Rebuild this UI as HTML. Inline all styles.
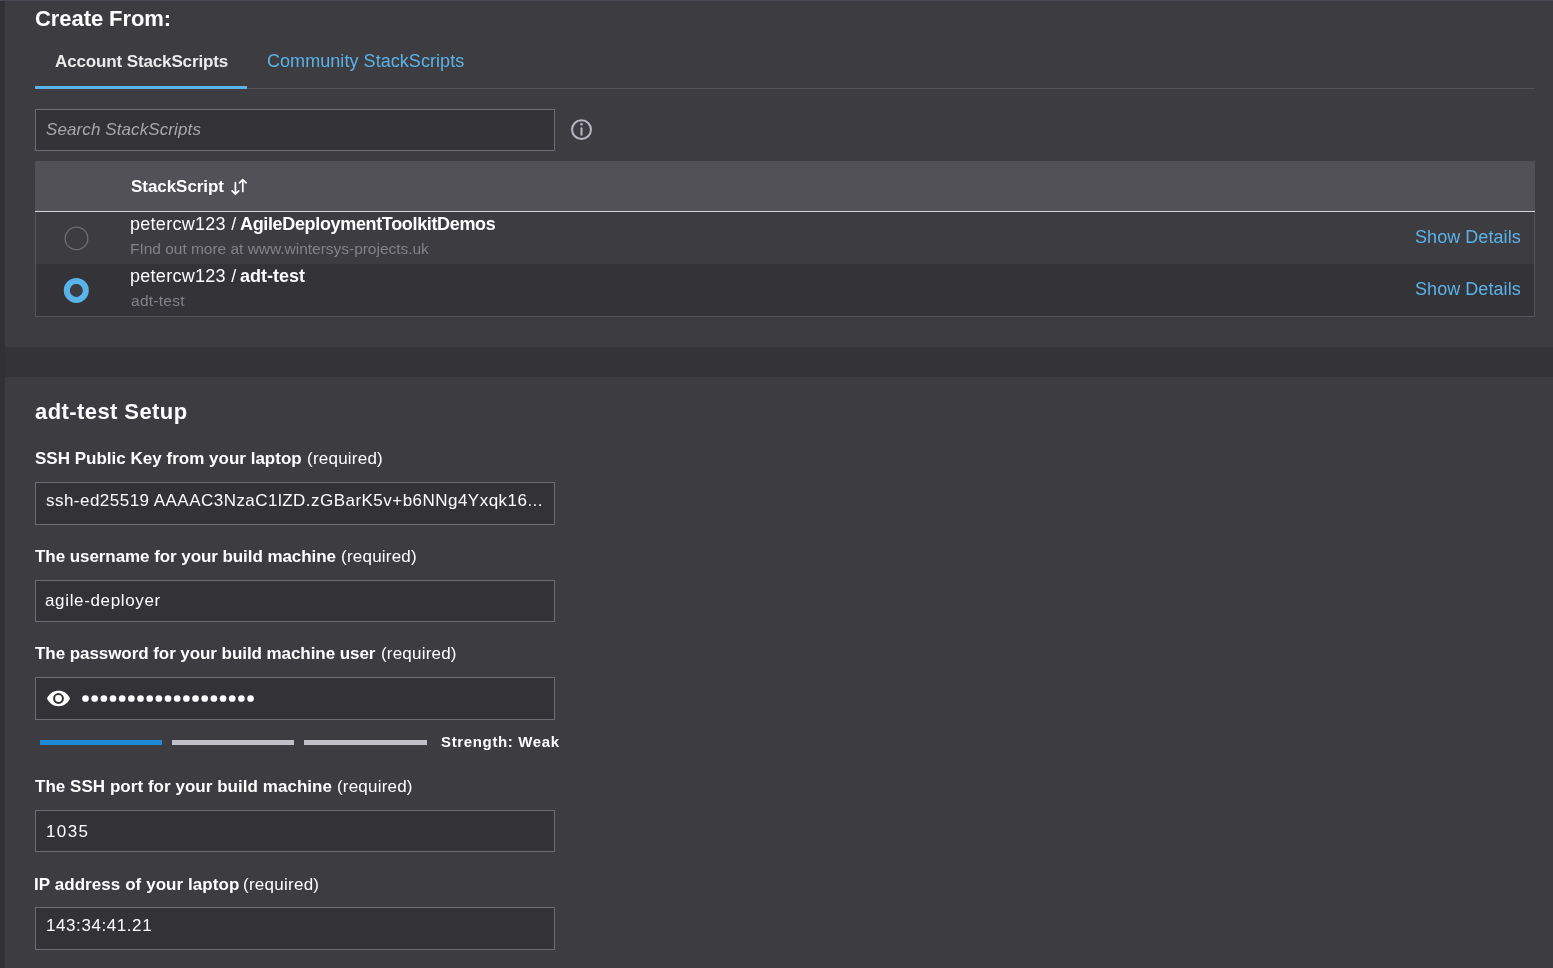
<!DOCTYPE html>
<html><head><meta charset="utf-8"><title>adt-test Setup</title>
<style>
html,body{margin:0;padding:0;width:1553px;height:968px;overflow:hidden;background:#343337;font-family:"Liberation Sans",sans-serif;}
.t{position:absolute;white-space:pre;will-change:transform;}
.r{position:absolute;display:block;}
</style></head><body>
<div class="r" style="left:0px;top:0px;width:5px;height:968px;background:#313034;"></div>
<div class="r" style="left:5px;top:0px;width:1548px;height:347px;background:#3d3c41;"></div>
<div class="r" style="left:0px;top:0px;width:1553px;height:1px;background:#4a4954;"></div>
<div class="r" style="left:5px;top:377px;width:1548px;height:591px;background:#3d3c41;"></div>
<div class="r" style="left:35px;top:88px;width:1500px;height:1px;background:#545358;"></div>
<div class="r" style="left:35px;top:86px;width:212px;height:3px;background:#5ab3e8;"></div>
<div class="r" style="left:35px;top:109px;width:520px;height:42px;background:#333237;box-sizing:border-box;border:1px solid #6e6d73"></div>
<svg class="r" style="left:570px;top:118px" width="23" height="23" viewBox="0 0 23 23"><circle cx="11.5" cy="11.6" r="9.45" fill="none" stroke="#b5b6c0" stroke-width="2.05"/><circle cx="11.5" cy="6.3" r="1.3" fill="#b5b6c0"/><rect x="10.5" y="9.2" width="2.0" height="8.6" rx="1.0" fill="#b5b6c0"/></svg>
<div class="r" style="left:35px;top:161px;width:1500px;height:50px;background:#525157;"></div>
<div class="r" style="left:35px;top:211px;width:1500px;height:1px;background:#d6d6de;"></div>
<div class="r" style="left:35px;top:212px;width:1500px;height:52px;background:#3d3c41;"></div>
<div class="r" style="left:35px;top:264px;width:1500px;height:52px;background:#343338;"></div>
<div class="r" style="left:35px;top:212px;width:1px;height:105px;background:#55545a;"></div>
<div class="r" style="left:1534px;top:212px;width:1px;height:105px;background:#55545a;"></div>
<div class="r" style="left:35px;top:316px;width:1500px;height:1px;background:#55545a;"></div>
<svg class="r" style="left:230px;top:177px" width="18" height="20" viewBox="0 0 18 20"><path d="M5.4 5.6 V17.1 M2.1 13.8 L5.4 17.1 L8.7 13.8" fill="none" stroke="#fff" stroke-width="1.7" stroke-linecap="round" stroke-linejoin="round"/><path d="M12.8 14.4 V2.6 M9.5 5.9 L12.8 2.6 L16.1 5.9" fill="none" stroke="#fff" stroke-width="1.7" stroke-linecap="round" stroke-linejoin="round"/></svg>
<svg class="r" style="left:63px;top:225px" width="27" height="27" viewBox="0 0 27 27"><circle cx="13.5" cy="13.4" r="11.3" fill="none" stroke="#6f6e73" stroke-width="1.3"/></svg>
<svg class="r" style="left:63px;top:277px" width="27" height="27" viewBox="0 0 27 27"><circle cx="13.3" cy="13.4" r="9.4" fill="none" stroke="#5ab3e8" stroke-width="6.2"/><circle cx="13.3" cy="13.4" r="6.3" fill="#3d3c41"/></svg>
<div class="r" style="left:35px;top:482px;width:520px;height:43px;background:#333237;box-sizing:border-box;border:1px solid #6e6d73"></div>
<div class="r" style="left:35px;top:580px;width:520px;height:42px;background:#333237;box-sizing:border-box;border:1px solid #6e6d73"></div>
<div class="r" style="left:35px;top:677px;width:520px;height:43px;background:#333237;box-sizing:border-box;border:1px solid #6e6d73"></div>
<svg class="r" style="left:46px;top:690px" width="25" height="17" viewBox="0 0 25 17"><path d="M0.9 8.5 C3.6 3.2 7.6 0.8 12.5 0.8 C17.4 0.8 21.4 3.2 24 8.5 C21.4 13.8 17.4 16.2 12.5 16.2 C7.6 16.2 3.6 13.8 0.9 8.5 Z" fill="#fff"/><circle cx="12.5" cy="8.5" r="5.4" fill="#333237"/><circle cx="12.5" cy="8.5" r="3.4" fill="#fff"/></svg>
<svg class="r" style="left:82px;top:695px" width="180" height="7" viewBox="0 0 180 7"><circle cx="3.50" cy="3.5" r="3.35" fill="#fff"/><circle cx="12.67" cy="3.5" r="3.35" fill="#fff"/><circle cx="21.84" cy="3.5" r="3.35" fill="#fff"/><circle cx="31.01" cy="3.5" r="3.35" fill="#fff"/><circle cx="40.18" cy="3.5" r="3.35" fill="#fff"/><circle cx="49.35" cy="3.5" r="3.35" fill="#fff"/><circle cx="58.52" cy="3.5" r="3.35" fill="#fff"/><circle cx="67.69" cy="3.5" r="3.35" fill="#fff"/><circle cx="76.86" cy="3.5" r="3.35" fill="#fff"/><circle cx="86.03" cy="3.5" r="3.35" fill="#fff"/><circle cx="95.20" cy="3.5" r="3.35" fill="#fff"/><circle cx="104.37" cy="3.5" r="3.35" fill="#fff"/><circle cx="113.54" cy="3.5" r="3.35" fill="#fff"/><circle cx="122.71" cy="3.5" r="3.35" fill="#fff"/><circle cx="131.88" cy="3.5" r="3.35" fill="#fff"/><circle cx="141.05" cy="3.5" r="3.35" fill="#fff"/><circle cx="150.22" cy="3.5" r="3.35" fill="#fff"/><circle cx="159.39" cy="3.5" r="3.35" fill="#fff"/><circle cx="168.56" cy="3.5" r="3.35" fill="#fff"/></svg>
<div class="r" style="left:40px;top:740px;width:122px;height:5px;background:#1b8bd8;"></div>
<div class="r" style="left:172px;top:740px;width:122px;height:5px;background:#c2c1c9;"></div>
<div class="r" style="left:304px;top:740px;width:123px;height:5px;background:#c2c1c9;"></div>
<div class="r" style="left:35px;top:810px;width:520px;height:42px;background:#333237;box-sizing:border-box;border:1px solid #6e6d73"></div>
<div class="r" style="left:35px;top:907px;width:520px;height:43px;background:#333237;box-sizing:border-box;border:1px solid #6e6d73"></div>
<div id="title" class="t" style="left:35.00px;top:8.18px;font-size:22px;line-height:22px;color:#ffffff;letter-spacing:-0.068px;font-weight:700;">Create From:</div>
<div id="acct" class="t" style="left:54.84px;top:53.11px;font-size:17px;line-height:17px;color:#ececec;letter-spacing:-0.129px;font-weight:700;">Account StackScripts</div>
<div id="comm" class="t" style="left:267.00px;top:52.26px;font-size:18px;line-height:18px;color:#5ab3e8;letter-spacing:0.055px;">Community StackScripts</div>
<div id="search" class="t" style="left:45.52px;top:120.61px;font-size:17px;line-height:17px;color:#a8a7ac;letter-spacing:0.101px;font-style:italic;">Search StackScripts</div>
<div id="hdr" class="t" style="left:131.08px;top:178.01px;font-size:17px;line-height:17px;color:#ffffff;letter-spacing:-0.052px;font-weight:700;">StackScript</div>
<div id="r1a" class="t" style="left:130.36px;top:214.76px;font-size:18px;line-height:18px;color:#ffffff;letter-spacing:0.279px;">petercw123 /</div>
<div id="r1b" class="t" style="left:240.26px;top:214.76px;font-size:18px;line-height:18px;color:#ffffff;letter-spacing:-0.344px;font-weight:700;">AgileDeploymentToolkitDemos</div>
<div id="r1s" class="t" style="left:130.08px;top:240.98px;font-size:15.5px;line-height:15.5px;color:#82828a;letter-spacing:-0.022px;">FInd out more at www.wintersys-projects.uk</div>
<div id="sd1" class="t" style="left:1415.10px;top:227.76px;font-size:18px;line-height:18px;color:#5ab3e8;letter-spacing:0.058px;">Show Details</div>
<div id="r2a" class="t" style="left:130.36px;top:266.76px;font-size:18px;line-height:18px;color:#ffffff;letter-spacing:0.279px;">petercw123 /</div>
<div id="r2b" class="t" style="left:240.30px;top:266.76px;font-size:18px;line-height:18px;color:#ffffff;letter-spacing:0.016px;font-weight:700;">adt-test</div>
<div id="r2s" class="t" style="left:131.40px;top:292.68px;font-size:15.5px;line-height:15.5px;color:#82828a;letter-spacing:0.269px;">adt-test</div>
<div id="sd2" class="t" style="left:1415.10px;top:279.56px;font-size:18px;line-height:18px;color:#5ab3e8;letter-spacing:0.058px;">Show Details</div>
<div id="setup" class="t" style="left:34.98px;top:401.28px;font-size:22px;line-height:22px;color:#ffffff;letter-spacing:0.423px;font-weight:700;">adt-test Setup</div>
<div id="l1a" class="t" style="left:34.58px;top:449.61px;font-size:17px;line-height:17px;color:#ffffff;letter-spacing:0.011px;font-weight:700;">SSH Public Key from your laptop</div>
<div id="l1b" class="t" style="left:306.80px;top:449.61px;font-size:17px;line-height:17px;color:#ffffff;letter-spacing:0.230px;">(required)</div>
<div id="in1" class="t" style="left:45.50px;top:492.01px;font-size:17px;line-height:17px;color:#ffffff;letter-spacing:0.471px;">ssh-ed25519 AAAAC3NzaC1lZD.zGBarK5v+b6NNg4Yxqk16...</div>
<div id="l2a" class="t" style="left:35.36px;top:548.41px;font-size:17px;line-height:17px;color:#ffffff;letter-spacing:-0.066px;font-weight:700;">The username for your build machine</div>
<div id="l2b" class="t" style="left:341.30px;top:548.41px;font-size:17px;line-height:17px;color:#ffffff;letter-spacing:0.224px;">(required)</div>
<div id="in2" class="t" style="left:45.20px;top:591.91px;font-size:17px;line-height:17px;color:#ffffff;letter-spacing:0.652px;">agile-deployer</div>
<div id="l3a" class="t" style="left:34.86px;top:645.01px;font-size:17px;line-height:17px;color:#ffffff;letter-spacing:-0.063px;font-weight:700;">The password for your build machine user</div>
<div id="l3b" class="t" style="left:380.80px;top:645.01px;font-size:17px;line-height:17px;color:#ffffff;letter-spacing:0.194px;">(required)</div>
<div id="str" class="t" style="left:441.02px;top:734.30px;font-size:15px;line-height:15px;color:#ffffff;letter-spacing:0.648px;font-weight:700;">Strength: Weak</div>
<div id="l4a" class="t" style="left:34.86px;top:778.21px;font-size:17px;line-height:17px;color:#ffffff;letter-spacing:0.039px;font-weight:700;">The SSH port for your build machine</div>
<div id="l4b" class="t" style="left:336.80px;top:778.21px;font-size:17px;line-height:17px;color:#ffffff;letter-spacing:0.194px;">(required)</div>
<div id="in4" class="t" style="left:46.00px;top:822.61px;font-size:17px;line-height:17px;color:#ffffff;letter-spacing:1.370px;">1035</div>
<div id="l5a" class="t" style="left:34.02px;top:875.61px;font-size:17px;line-height:17px;color:#ffffff;letter-spacing:0.069px;font-weight:700;">IP address of your laptop</div>
<div id="l5b" class="t" style="left:243.30px;top:875.61px;font-size:17px;line-height:17px;color:#ffffff;letter-spacing:0.257px;">(required)</div>
<div id="in5" class="t" style="left:46.00px;top:916.81px;font-size:17px;line-height:17px;color:#ffffff;letter-spacing:0.575px;">143:34:41.21</div>
</body></html>
